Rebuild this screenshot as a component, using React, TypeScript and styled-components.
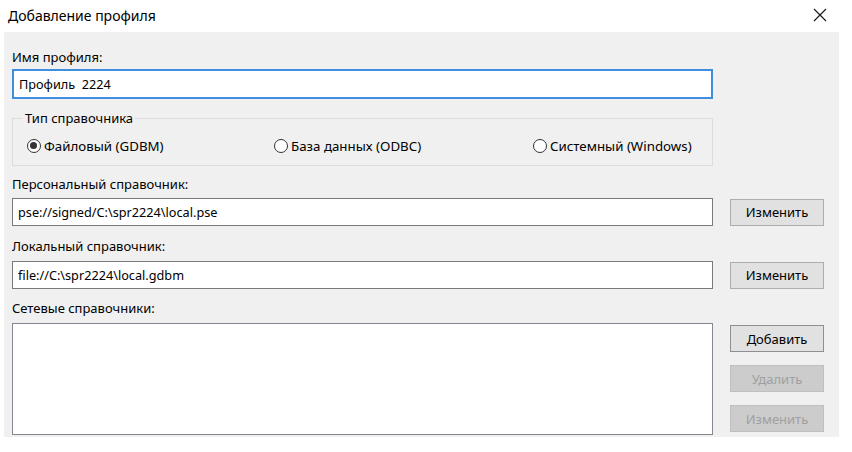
import React from "react";
import styled, { createGlobalStyle } from "styled-components";

const GlobalStyle = createGlobalStyle`
  html, body {
    margin: 0;
    padding: 0;
    background: #ffffff;
  }
  * {
    box-sizing: border-box;
  }
`;

const FONT = `"Noto Sans", "Open Sans", sans-serif`;

type ButtonProps = {
  $disabled?: boolean;
  $default?: boolean;
};

const App = () => {
  return (
    <>
      <GlobalStyle />
      <SWindow>
        <STitleBar>
          <STitle>Добавление профиля</STitle>
          <SClose aria-label="close">
            <svg width="14" height="14" viewBox="0 0 14 14">
              <path d="M1 1 L13 13 M13 1 L1 13" stroke="#1a1a1a" strokeWidth="1.2" fill="none" />
            </svg>
          </SClose>
        </STitleBar>

        <SBody>
          <SLabel $top={17}>Имя профиля:</SLabel>
          <SRow $top={4}>
            <SInput $focused value="Профиль  2224" readOnly />
          </SRow>

          <SGroup>
            <SLegend>Тип справочника</SLegend>
            <SRadioRow>
              <SRadioItem>
                <SRadio $checked />
                Файловый (GDBM)
              </SRadioItem>
              <SRadioItem>
                <SRadio />
                База данных (ODBC)
              </SRadioItem>
              <SRadioItem>
                <SRadio />
                Системный (Windows)
              </SRadioItem>
            </SRadioRow>
          </SGroup>

          <SLabel $top={10}>Персональный справочник:</SLabel>
          <SRow $top={6}>
            <SInput value="pse://signed/C:\spr2224\local.pse" readOnly />
            <SButton>Изменить</SButton>
          </SRow>

          <SLabel $top={12}>Локальный справочник:</SLabel>
          <SRow $top={7}>
            <SInput value="file://C:\spr2224\local.gdbm" readOnly />
            <SButton>Изменить</SButton>
          </SRow>

          <SLabel $top={11}>Сетевые справочники:</SLabel>
          <SRow $top={7}>
            <SList />
            <SButtonColumn>
              <SButton $default>Добавить</SButton>
              <SButton $disabled>Удалить</SButton>
              <SButton $disabled>Изменить</SButton>
            </SButtonColumn>
          </SRow>
        </SBody>
      </SWindow>
    </>
  );
};

const SWindow = styled.div`
  width: 852px;
  height: 452px;
  background: #ffffff;
  font-family: ${FONT};
  color: #000000;
  overflow: hidden;
`;

const STitleBar = styled.div`
  display: flex;
  align-items: center;
  justify-content: space-between;
  height: 32px;
  padding: 0 25px 2px 8px;
`;

const STitle = styled.div`
  font-size: 14px;
  color: #000000;
`;

const SClose = styled.div`
  display: flex;
  width: 14px;
  height: 14px;
`;

const SBody = styled.div`
  display: flex;
  flex-direction: column;
  width: 835px;
  margin-left: 4px;
  height: 405px;
  padding: 0 15px 2px 8px;
  background: #f0f0f0;
`;

const SLabel = styled.div<{ $top: number }>`
  margin-top: ${(p) => p.$top}px;
  height: 16px;
  line-height: 16px;
  font-size: 13px;
  color: #000000;
`;

const SRow = styled.div<{ $top: number }>`
  display: grid;
  grid-template-columns: 701px 94px;
  column-gap: 17px;
  align-items: center;
  margin-top: ${(p) => p.$top}px;
`;

const SInput = styled.input<{ $focused?: boolean }>`
  width: 701px;
  height: ${(p) => (p.$focused ? 30 : 28)}px;
  margin: 0;
  padding: 0 5px;
  font-family: ${FONT};
  font-size: 12.7px;
  color: #000000;
  background: #ffffff;
  border: ${(p) => (p.$focused ? "2px solid #3e8ede" : "1px solid #7a7a7a")};
  outline: none;
  border-radius: 0;
`;

const SGroup = styled.fieldset`
  margin: 11px 0 0 0;
  width: 701px;
  height: 56px;
  padding: 0 19px 0 14px;
  border: 1px solid #dcdcdc;
  border-radius: 0;
  min-width: 0;
`;

const SLegend = styled.legend`
  padding: 0 2px;
  margin-left: -4px;
  height: 16px;
  line-height: 16px;
  font-size: 13px;
  color: #000000;
`;

const SRadioRow = styled.div`
  display: grid;
  grid-template-columns: 247px 259px auto;
  align-items: center;
  margin-top: 12px;
  height: 16px;
`;

const SRadioItem = styled.label`
  display: flex;
  align-items: center;
  gap: 3px;
  font-size: 13.3px;
  line-height: 16px;
  white-space: nowrap;
`;

const SRadio = styled.span<{ $checked?: boolean }>`
  position: relative;
  width: 14px;
  height: 14px;
  flex: none;
  border: 1.3px solid #333333;
  border-radius: 50%;
  background: #ffffff;

  &::after {
    content: "";
    display: ${(p) => (p.$checked ? "block" : "none")};
    position: absolute;
    left: 2px;
    top: 2px;
    width: 7.4px;
    height: 7.4px;
    border-radius: 50%;
    background: #333333;
  }
`;

const SButton = styled.div<ButtonProps>`
  display: flex;
  align-items: center;
  justify-content: center;
  width: 94px;
  height: 27px;
  font-size: 13px;
  color: ${(p) => (p.$disabled ? "#a0a0a0" : "#000000")};
  background: ${(p) => (p.$disabled ? "#cccccc" : "#e1e1e1")};
  border: 1px solid ${(p) => (p.$disabled ? "#bfbfbf" : p.$default ? "#8f8f8f" : "#adadad")};
  cursor: default;
`;

const SList = styled.div`
  align-self: start;
  width: 701px;
  height: 112px;
  background: #ffffff;
  border: 1px solid #828790;
`;

const SButtonColumn = styled.div`
  align-self: start;
  display: flex;
  flex-direction: column;
  gap: 13px;
  padding-top: 2px;
`;

export default App;
